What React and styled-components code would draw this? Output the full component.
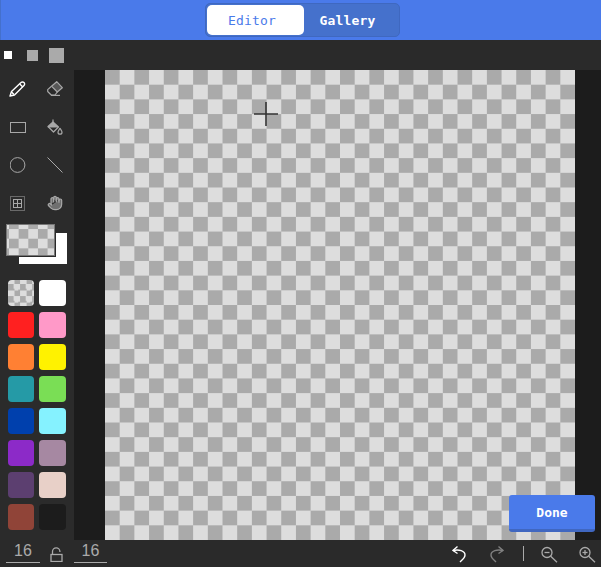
import styled, { createGlobalStyle } from 'styled-components';
import { Hand } from 'lucide-react';

const checker = (size, x = 0, y = 0) => `repeating-conic-gradient(#dddddd 0 25%, #aaaaaa 0 50%) ${x}px ${y}px / ${size}px ${size}px`;

const GlobalStyle = createGlobalStyle`
  html, body { margin: 0; padding: 0; background: #2a2a2a; }
`;

const Page = styled.div`
  position: relative;
  width: 601px;
  height: 567px;
  display: flex;
  flex-direction: column;
  overflow: hidden;
  background: #2a2a2a;
  font-family: "Liberation Sans", sans-serif;
`;

const Header = styled.div`
  height: 40px;
  flex: none;
  box-sizing: border-box;
  background: #4a7aea;
  border-left: 1px solid #4470cc;
  display: flex;
  justify-content: center;
  align-items: center;
  padding-left: 3px;
`;

const Tabs = styled.div`
  width: 195px;
  height: 34px;
  box-sizing: border-box;
  padding: 1px;
  display: flex;
  background: #4571cc;
  border: 1px solid #3f68c0;
  border-radius: 5px;
`;

const Tab = styled.div`
  flex: ${(p) => (p.$active ? '0 0 97px' : '1')};
  box-sizing: border-box;
  padding-right: 7px;
  display: flex;
  align-items: center;
  justify-content: center;
  border-radius: 5px;
  background: ${(p) => (p.$active ? '#ffffff' : 'transparent')};
  color: ${(p) => (p.$active ? '#4a7aea' : '#ffffff')};
  font-family: "DejaVu Sans Mono", monospace;
  font-weight: ${(p) => (p.$active ? 400 : 700)};
  font-size: 13px;
  letter-spacing: 0.2px;
`;

const SizeBar = styled.div`
  height: 30px;
  flex: none;
  display: flex;
  align-items: center;
  padding-left: 4px;
`;

const SizeDot = styled.div`
  flex: none;
  width: ${(p) => p.$size}px;
  height: ${(p) => p.$size}px;
  margin-right: ${(p) => p.$gap}px;
  background: ${(p) => p.$color};
`;

const Main = styled.div`
  flex: 1;
  display: flex;
  min-height: 0;
`;

const Sidebar = styled.div`
  width: 74px;
  flex: none;
  background: #2b2b2b;
`;

const Tools = styled.div`
  display: grid;
  grid-template-columns: 35px 39px;
  grid-auto-rows: 38px;
`;

const Tool = styled.div`
  display: flex;
  align-items: center;
  justify-content: center;
  color: ${(p) => (p.$active ? '#ffffff' : '#a8a8a8')};
`;

const Preview = styled.div`
  position: relative;
  height: 40px;
  margin-top: 2px;
`;

const BackColor = styled.div`
  position: absolute;
  left: 19px;
  top: 9px;
  width: 48px;
  height: 31px;
  background: #ffffff;
`;

const FrontColor = styled.div`
  position: absolute;
  left: 6px;
  top: 0;
  width: 49px;
  height: 32px;
  box-sizing: border-box;
  border: 1px solid #777777;
  box-shadow: 1px 1px 0 #2a2a2a;
  background: ${checker(19.3, 2, -5.6)};
`;

const Swatches = styled.div`
  display: grid;
  grid-template-columns: 26px 27px;
  grid-auto-rows: 26px;
  gap: 6px 5px;
  padding-left: 8px;
  margin-top: 16px;
`;

const Swatch = styled.div`
  border-radius: 4px;
  background: ${(p) => (p.$checker ? checker(12.1, 0, 4) : p.$color)};
`;

const Stage = styled.div`
  flex: 1;
  background: #1c1c1c;
  display: flex;
  padding-left: 31px;
`;

const Canvas = styled.div`
  position: relative;
  width: 470px;
  height: 470px;
  background: ${checker(29.375)};
`;

const Crosshair = styled.svg`
  position: absolute;
  left: 149px;
  top: 32px;
`;

const DoneButton = styled.button`
  position: absolute;
  left: 509px;
  top: 495px;
  width: 86px;
  height: 37px;
  box-sizing: border-box;
  background: #4a7aea;
  border: 0;
  border-bottom: 3px solid #4067c0;
  border-radius: 3px;
  color: #ffffff;
  font-family: "DejaVu Sans Mono", monospace;
  font-weight: 700;
  font-size: 13px;
  padding: 0;
`;

const Footer = styled.div`
  height: 27px;
  flex: none;
  display: flex;
  align-items: center;
  color: #aaaaaa;
`;

const SizeInput = styled.div`
  width: ${(p) => p.$width}px;
  height: 22px;
  margin-left: ${(p) => p.$left}px;
  margin-top: -4px;
  box-sizing: border-box;
  border-bottom: 1px solid #aaaaaa;
  text-align: center;
  font-size: 16px;
  line-height: 20px;
  color: #aaaaaa;
`;

const LockIcon = styled.svg`
  flex: none;
  margin-left: 10px;
  margin-top: 1px;
`;

const Actions = styled.div`
  margin-left: auto;
  padding-right: 4px;
  display: flex;
  align-items: center;
`;

const ActionIcon = styled.svg`
  flex: none;
  margin-left: ${(p) => p.$left || 0}px;
  color: ${(p) => (p.$dim ? '#808080' : p.$bright ? '#ffffff' : '#aaaaaa')};
`;

const Divider = styled.div`
  width: 1px;
  height: 15px;
  background: #aaaaaa;
  margin-left: 18px;
`;

const colors = [
  '#ff2020', '#ff99c8',
  '#ff8033', '#fff200',
  '#259aa6', '#7ade55',
  '#0040ad', '#85f2ff',
  '#8c2ac8', '#a688a2',
  '#5c3f70', '#e8d0c8',
  '#904438', '#1c1c1c',
];

function PencilIcon() {
  return (
    <svg width="17" height="16" viewBox="0 0 17 16" fill="none" stroke="currentColor" strokeWidth="1.4" strokeLinejoin="round">
      <path d="M1 15L2.5 10.5L12 1.6a1.9 1.9 0 0 1 3 3L5.5 14Z" />
      <path d="M10.8 3L13.8 6M2.5 11L5 13.6" />
    </svg>
  );
}

function EraserIcon() {
  return (
    <svg width="16" height="16" viewBox="0 0 16 16" fill="none" stroke="currentColor" strokeWidth="1.2" strokeLinejoin="round">
      <path d="M4.5 5.2L9.7 0.7L15.3 6.7L10.3 11Z" fill="currentColor" fillOpacity="0.35" />
      <path d="M4.5 5.2L0.7 8.6V10.5L4.2 14H8L10.3 11" />
      <path d="M4 14.4H13" />
    </svg>
  );
}

function RectIcon() {
  return (
    <svg width="16" height="11" viewBox="0 0 16 11" fill="none" stroke="currentColor">
      <rect x="0.5" y="0.5" width="15" height="10" />
    </svg>
  );
}

function BucketIcon() {
  return (
    <svg width="16" height="16" viewBox="0 0 16 16" fill="none" stroke="currentColor" strokeWidth="1.2" strokeLinejoin="round">
      <path d="M1 7.5L6 3L11.5 8H1.5Z" fill="currentColor" />
      <path d="M1 7.5L6.5 13L11.5 8" />
      <path d="M6 0.5V5" />
      <path d="M13 9.3C12 11 11 12 11 13.2a2 2 0 0 0 4 0C15 12 14 11 13 9.3Z" />
    </svg>
  );
}

function CircleIcon() {
  return (
    <svg width="16" height="16" viewBox="0 0 16 16" fill="none" stroke="currentColor">
      <circle cx="7.5" cy="8" r="7.4" />
    </svg>
  );
}

function LineIcon() {
  return (
    <svg width="16" height="16" viewBox="0 0 16 16" fill="none" stroke="currentColor">
      <path d="M0.5 0.5L15.5 15.5" />
    </svg>
  );
}

function SelectIcon() {
  return (
    <svg width="15" height="15" viewBox="0 0 15 15" fill="none" stroke="currentColor">
      <rect x="0.5" y="0.5" width="14" height="14" strokeDasharray="1 1" />
      <rect x="3.5" y="3.5" width="8" height="8" />
      <path d="M7.5 3.5v8M3.5 7.5h8" />
    </svg>
  );
}

function HistoryIcon({ flip, ...rest }) {
  return (
    <ActionIcon width="16" height="18" viewBox="0 0 16 18" fill="none" stroke="currentColor" strokeWidth="1.4" {...rest}>
      <g transform={flip ? 'matrix(-1 0 0 1 16 0)' : undefined}>
        <path d="M6.5 1.5L2 5.5L6.5 8.5" />
        <path d="M2 5.5C8 4 14 6 14 10C14 13 11 15 9 17" />
      </g>
    </ActionIcon>
  );
}

function ZoomIcon({ plus, ...rest }) {
  return (
    <ActionIcon width="18" height="18" viewBox="0 0 18 18" fill="none" stroke="currentColor" strokeWidth="1.3" {...rest}>
      <circle cx="6" cy="7.5" r="5" />
      <path d="M3.5 7.5H8.5" />
      {plus && <path d="M6 5V10" />}
      <path d="M9.7 11.2L16 17.2" />
    </ActionIcon>
  );
}

export default function App() {
  return (
    <Page>
      <GlobalStyle />
      <Header>
        <Tabs>
          <Tab $active>Editor</Tab>
          <Tab>Gallery</Tab>
        </Tabs>
      </Header>
      <SizeBar>
        <SizeDot $size={8} $gap={15} $color="#ffffff" />
        <SizeDot $size={11} $gap={11} $color="#aaaaaa" />
        <SizeDot $size={15} $gap={0} $color="#aaaaaa" />
      </SizeBar>
      <Main>
        <Sidebar>
          <Tools>
            <Tool $active><PencilIcon /></Tool>
            <Tool><EraserIcon /></Tool>
            <Tool><RectIcon /></Tool>
            <Tool><BucketIcon /></Tool>
            <Tool><CircleIcon /></Tool>
            <Tool><LineIcon /></Tool>
            <Tool><SelectIcon /></Tool>
            <Tool><Hand size={16} strokeWidth={1.8} fill="#a8a8a8" fillOpacity={0.55} /></Tool>
          </Tools>
          <Preview>
            <BackColor />
            <FrontColor />
          </Preview>
          <Swatches>
            <Swatch $checker />
            <Swatch $color="#ffffff" />
            {colors.map((c) => <Swatch key={c} $color={c} />)}
          </Swatches>
        </Sidebar>
        <Stage>
          <Canvas>
            <Crosshair width="24" height="24" viewBox="0 0 24 24">
              <path d="M0 12H24M12 0V24" stroke="#333333" strokeWidth="1.6" fill="none" />
            </Crosshair>
          </Canvas>
        </Stage>
      </Main>
      <DoneButton>Done</DoneButton>
      <Footer>
        <SizeInput $width={34} $left={6}>16</SizeInput>
        <LockIcon width="13" height="15" viewBox="0 0 13 15" fill="none" stroke="currentColor" strokeWidth="1.3">
          <rect x="1" y="7.5" width="11" height="7" />
          <path d="M2.5 7.5V4.5a3.7 3.7 0 0 1 7.4 0V5" />
        </LockIcon>
        <SizeInput $width={33} $left={11}>16</SizeInput>
        <Actions>
          <HistoryIcon $bright />
          <HistoryIcon $dim flip $left={22} />
          <Divider />
          <ZoomIcon $left={17} />
          <ZoomIcon plus $left={20} />
        </Actions>
      </Footer>
    </Page>
  );
}
